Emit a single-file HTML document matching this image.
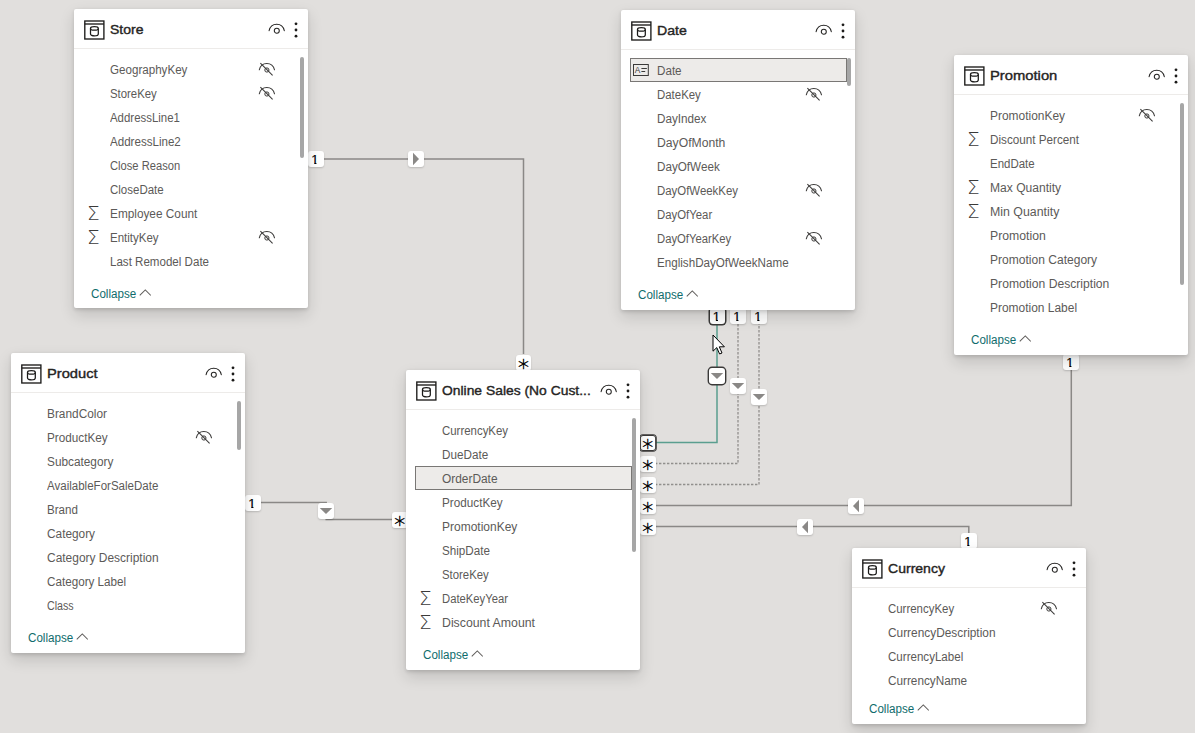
<!DOCTYPE html>
<html lang="en"><head><meta charset="utf-8"><title>Model view</title><style>
*{box-sizing:border-box}
html,body{margin:0;padding:0}
body{width:1195px;height:733px;overflow:hidden;background:#e1dfdd;font-family:"Liberation Sans",sans-serif;position:relative}
.card{position:absolute;width:234px;background:#fff;border-radius:2px;box-shadow:0 6.4px 14.4px rgba(0,0,0,.14),0 1.2px 3.6px rgba(0,0,0,.12)}
.hdr{position:absolute;left:0;top:0;width:100%;height:40px;border-bottom:1px solid #edebe9}
.ticon{position:absolute;left:10px;top:11px}
.title{position:absolute;left:36.1px;top:0;line-height:41px;font-size:13.7px;-webkit-text-stroke:.4px #252423;color:#252423;white-space:nowrap;transform-origin:0 50%}
.eye{position:absolute;left:193.5px;top:14.2px}
.dots{position:absolute;left:220.3px;top:13px}
.row{position:absolute;left:9px;width:217px;height:24px;border:1px solid transparent}
.row.sel{background:#edebe9;border:1px solid #797775}
.fn{position:absolute;left:25.7px;top:0;line-height:25px;font-size:12px;color:#5c5a58;white-space:nowrap;transform-origin:0 50%}
.sig{position:absolute;left:2.8px;top:0;line-height:22px;font-size:19px;font-weight:200;color:#3b3a39;font-family:"DejaVu Sans Light","DejaVu Sans",sans-serif;transform:scaleX(1.06);transform-origin:0 0}
.hid{position:absolute;left:174px;top:4px}
.fticon{position:absolute;left:2px;top:5px}
.sb{position:absolute;left:226px;width:4px;background:#a6a6a6;border-radius:2px}
.collapse{position:absolute;left:17.1px;height:20px;line-height:20px;font-size:12px;color:#0f6c6c;white-space:nowrap}
.ct{display:inline-block;transform-origin:0 50%}
.chev{position:absolute;left:47.8px;top:5.4px}
.mk{position:absolute;background:#fff;border-radius:3px;box-shadow:0 1px 2px rgba(0,0,0,.18);text-align:center;overflow:visible}
.mk.hot{box-shadow:0 0 0 1.5px #3b3a39}
.mk.hot.in{box-shadow:0 0 0 .8px #3b3a39,inset 0 0 0 .9px #3b3a39}
.one{position:absolute;left:-1px;right:1px;top:0;line-height:17.6px;font-size:13px;color:#000;-webkit-text-stroke:.2px #000;clip-path:polygon(0 0,100% 0,100% 11.9px,calc(50% + 1.6px) 11.9px,calc(50% + 1.6px) 100%,calc(50% - .5px) 100%,calc(50% - .5px) 11.9px,0 11.9px)}
.star{position:absolute;left:0;right:0;top:5px;line-height:16px;font-size:22px;font-weight:200;color:#000;-webkit-text-stroke:.42px #000;font-family:"DejaVu Sans Light","DejaVu Sans",sans-serif}
.ab{position:absolute;width:16px;height:16px;background:#fff;border-radius:3px;box-shadow:0 1px 2px rgba(0,0,0,.18)}
.ab.hot{box-shadow:0 0 0 1.4px #3b3a39}
.ab svg{position:absolute;left:0;top:0}
#wires{position:absolute;left:0;top:0}
#cursor{position:absolute;left:712.1px;top:334px}
</style></head><body>
<svg id="wires" width="1195" height="733" viewBox="0 0 1195 733" fill="none">
<g stroke="#8a8886" stroke-width="1.5">
<path d="M323 159 H523.5 V354"/>
<path d="M260 502.5 H326.2 V519.6 H392"/>
<path d="M655 505.5 H1071.3 V369"/>
<path d="M655 526.6 H968.8 V534"/>
</g>
<g stroke="#918f8d" stroke-width="1.3" stroke-dasharray="2.4 1.6">
<path d="M655 463.5 H738 V324"/>
<path d="M655 484.5 H759 V324"/>
</g>
<path d="M655 442.5 H717 V324" stroke="#5a9e8f" stroke-width="1.5"/>
</svg>
<div class="mk hot" style="left:709.6px;top:308px;width:15.6px;height:16px"><span class="one">1</span></div>
<div class="mk " style="left:730px;top:308px;width:15.6px;height:16px"><span class="one">1</span></div>
<div class="mk " style="left:751px;top:308px;width:15.6px;height:16px"><span class="one">1</span></div>
<div class="mk " style="left:308px;top:151px;width:15.6px;height:16px"><span class="one">1</span></div>
<div class="mk " style="left:245px;top:495px;width:15.6px;height:16px"><span class="one">1</span></div>
<div class="mk " style="left:1063px;top:354px;width:15.6px;height:16px"><span class="one">1</span></div>
<div class="mk " style="left:961px;top:533px;width:15.6px;height:16px"><span class="one">1</span></div>
<div class="mk " style="left:515.7px;top:354.6px;width:15.6px;height:16px"><span class="star">*</span></div>
<div class="mk " style="left:392px;top:512px;width:15.6px;height:16px"><span class="star">*</span></div>
<div class="mk hot in" style="left:640px;top:435px;width:15.6px;height:16px"><span class="star">*</span></div>
<div class="mk " style="left:640px;top:456px;width:15.6px;height:16px"><span class="star">*</span></div>
<div class="mk " style="left:640px;top:477px;width:15.6px;height:16px"><span class="star">*</span></div>
<div class="mk " style="left:640px;top:498px;width:15.6px;height:16px"><span class="star">*</span></div>
<div class="mk " style="left:640px;top:519px;width:15.6px;height:16px"><span class="star">*</span></div>
<div class="ab " style="left:408px;top:151px"><svg width="16" height="16" viewBox="0 0 16 16"><polygon points="5,1.8 11,8 5,14.2" fill="#8a8886"/></svg></div>
<div class="ab " style="left:318px;top:503px"><svg width="16" height="16" viewBox="0 0 16 16"><polygon points="1.8,5 14.2,5 8,11" fill="#8a8886"/></svg></div>
<div class="ab hot" style="left:709px;top:368px"><svg width="16" height="16" viewBox="0 0 16 16"><polygon points="1.8,5 14.2,5 8,11" fill="#8a8886"/></svg></div>
<div class="ab " style="left:730px;top:378px"><svg width="16" height="16" viewBox="0 0 16 16"><polygon points="1.8,5 14.2,5 8,11" fill="#8a8886"/></svg></div>
<div class="ab " style="left:751px;top:389px"><svg width="16" height="16" viewBox="0 0 16 16"><polygon points="1.8,5 14.2,5 8,11" fill="#8a8886"/></svg></div>
<div class="ab " style="left:848px;top:498px"><svg width="16" height="16" viewBox="0 0 16 16"><polygon points="11,1.8 5,8 11,14.2" fill="#8a8886"/></svg></div>
<div class="ab " style="left:797px;top:519px"><svg width="16" height="16" viewBox="0 0 16 16"><polygon points="11,1.8 5,8 11,14.2" fill="#8a8886"/></svg></div>
<div class="card" style="left:74px;top:9px;height:299px">
<div class="hdr"><svg class="ticon" width="22" height="21" viewBox="0 0 22 21"><rect x="0.8" y="1" width="19.1" height="18" fill="none" stroke="#1b1a19" stroke-width="1.35"/><line x1="0.8" y1="4" x2="19.9" y2="4" stroke="#1b1a19" stroke-width="1.35"/><ellipse cx="10.4" cy="8.4" rx="3.9" ry="1.8" fill="none" stroke="#1b1a19" stroke-width="1.25"/><path d="M6.5 8.4 V14 A3.9 1.9 0 0 0 14.3 14 V8.4" fill="none" stroke="#1b1a19" stroke-width="1.25"/></svg><span class="title" style="transform:scaleX(1.021)">Store</span><svg class="eye" width="18" height="13" viewBox="0 0 18 13"><path d="M1.1 7.7 C2.1 3.4 5.2 1.3 8.7 1.3 C12.2 1.3 15.3 3.4 16.3 7.7" fill="none" stroke="#252423" stroke-width="1.05" stroke-linecap="round"/><circle cx="8.8" cy="7.7" r="2.5" fill="none" stroke="#252423" stroke-width="1.05"/></svg><svg class="dots" width="4" height="16" viewBox="0 0 4 16"><circle cx="2" cy="1.8" r="1.4" fill="#1b1a19"/><circle cx="2" cy="8" r="1.4" fill="#1b1a19"/><circle cx="2" cy="14.2" r="1.4" fill="#1b1a19"/></svg></div>
<div class="list">
<div class="row" style="top:48px"><span class="fn" style="transform:scaleX(0.967)">GeographyKey</span><svg class="hid" width="18" height="14" viewBox="0 0 18 14"><path d="M1.3 7.8 C2.3 3.6 5.2 1.4 8.8 1.4 C12.4 1.4 15.5 3.6 16.5 7.8" fill="none" stroke="#3b3a39" stroke-width="1.05" stroke-linecap="round"/><circle cx="8.9" cy="8" r="2.1" fill="none" stroke="#3b3a39" stroke-width="1"/><line x1="2.4" y1="1.2" x2="14.6" y2="13.4" stroke="#3b3a39" stroke-width="1.05"/></svg></div>
<div class="row" style="top:72px"><span class="fn" style="transform:scaleX(0.948)">StoreKey</span><svg class="hid" width="18" height="14" viewBox="0 0 18 14"><path d="M1.3 7.8 C2.3 3.6 5.2 1.4 8.8 1.4 C12.4 1.4 15.5 3.6 16.5 7.8" fill="none" stroke="#3b3a39" stroke-width="1.05" stroke-linecap="round"/><circle cx="8.9" cy="8" r="2.1" fill="none" stroke="#3b3a39" stroke-width="1"/><line x1="2.4" y1="1.2" x2="14.6" y2="13.4" stroke="#3b3a39" stroke-width="1.05"/></svg></div>
<div class="row" style="top:96px"><span class="fn" style="transform:scaleX(0.952)">AddressLine1</span></div>
<div class="row" style="top:120px"><span class="fn" style="transform:scaleX(0.965)">AddressLine2</span></div>
<div class="row" style="top:144px"><span class="fn" style="transform:scaleX(0.931)">Close Reason</span></div>
<div class="row" style="top:168px"><span class="fn" style="transform:scaleX(0.958)">CloseDate</span></div>
<div class="row" style="top:192px"><span class="sig">Σ</span><span class="fn" style="transform:scaleX(0.984)">Employee Count</span></div>
<div class="row" style="top:216px"><span class="sig">Σ</span><span class="fn" style="transform:scaleX(0.959)">EntityKey</span><svg class="hid" width="18" height="14" viewBox="0 0 18 14"><path d="M1.3 7.8 C2.3 3.6 5.2 1.4 8.8 1.4 C12.4 1.4 15.5 3.6 16.5 7.8" fill="none" stroke="#3b3a39" stroke-width="1.05" stroke-linecap="round"/><circle cx="8.9" cy="8" r="2.1" fill="none" stroke="#3b3a39" stroke-width="1"/><line x1="2.4" y1="1.2" x2="14.6" y2="13.4" stroke="#3b3a39" stroke-width="1.05"/></svg></div>
<div class="row" style="top:240px"><span class="fn" style="transform:scaleX(0.964)">Last Remodel Date</span></div>
</div>
<div class="sb" style="top:48px;height:101px"></div>
<div class="collapse" style="top:274.5px"><span class="ct" style="transform:scaleX(0.968)">Collapse</span><svg class="chev" width="12.6" height="7.2" viewBox="0 0 12 7"><path d="M0.6 6.3 L6 0.9 L11.4 6.3" fill="none" stroke="#605e5c" stroke-width="1"/></svg></div>
</div>
<div class="card" style="left:621px;top:10px;height:300px">
<div class="hdr"><svg class="ticon" width="22" height="21" viewBox="0 0 22 21"><rect x="0.8" y="1" width="19.1" height="18" fill="none" stroke="#1b1a19" stroke-width="1.35"/><line x1="0.8" y1="4" x2="19.9" y2="4" stroke="#1b1a19" stroke-width="1.35"/><ellipse cx="10.4" cy="8.4" rx="3.9" ry="1.8" fill="none" stroke="#1b1a19" stroke-width="1.25"/><path d="M6.5 8.4 V14 A3.9 1.9 0 0 0 14.3 14 V8.4" fill="none" stroke="#1b1a19" stroke-width="1.25"/></svg><span class="title" style="transform:scaleX(1.030)">Date</span><svg class="eye" width="18" height="13" viewBox="0 0 18 13"><path d="M1.1 7.7 C2.1 3.4 5.2 1.3 8.7 1.3 C12.2 1.3 15.3 3.4 16.3 7.7" fill="none" stroke="#252423" stroke-width="1.05" stroke-linecap="round"/><circle cx="8.8" cy="7.7" r="2.5" fill="none" stroke="#252423" stroke-width="1.05"/></svg><svg class="dots" width="4" height="16" viewBox="0 0 4 16"><circle cx="2" cy="1.8" r="1.4" fill="#1b1a19"/><circle cx="2" cy="8" r="1.4" fill="#1b1a19"/><circle cx="2" cy="14.2" r="1.4" fill="#1b1a19"/></svg></div>
<div class="list">
<div class="row sel" style="top:48px"><svg class="fticon" width="16" height="12" viewBox="0 0 16 12"><rect x="0.5" y="0.5" width="14.8" height="11" fill="none" stroke="#3b3a39" stroke-width="1"/><text x="1.7" y="9.1" font-size="8.4" font-family="Liberation Sans, sans-serif" fill="#3b3a39">A</text><line x1="8.4" y1="4.5" x2="13.9" y2="4.5" stroke="#3b3a39" stroke-width="1"/><line x1="8.4" y1="7.5" x2="12.2" y2="7.5" stroke="#3b3a39" stroke-width="1"/></svg><span class="fn" style="transform:scaleX(0.970)">Date</span></div>
<div class="row" style="top:72px"><span class="fn" style="transform:scaleX(0.952)">DateKey</span><svg class="hid" width="18" height="14" viewBox="0 0 18 14"><path d="M1.3 7.8 C2.3 3.6 5.2 1.4 8.8 1.4 C12.4 1.4 15.5 3.6 16.5 7.8" fill="none" stroke="#3b3a39" stroke-width="1.05" stroke-linecap="round"/><circle cx="8.9" cy="8" r="2.1" fill="none" stroke="#3b3a39" stroke-width="1"/><line x1="2.4" y1="1.2" x2="14.6" y2="13.4" stroke="#3b3a39" stroke-width="1.05"/></svg></div>
<div class="row" style="top:96px"><span class="fn" style="transform:scaleX(0.976)">DayIndex</span></div>
<div class="row" style="top:120px"><span class="fn" style="transform:scaleX(1.015)">DayOfMonth</span></div>
<div class="row" style="top:144px"><span class="fn" style="transform:scaleX(0.973)">DayOfWeek</span></div>
<div class="row" style="top:168px"><span class="fn" style="transform:scaleX(0.951)">DayOfWeekKey</span><svg class="hid" width="18" height="14" viewBox="0 0 18 14"><path d="M1.3 7.8 C2.3 3.6 5.2 1.4 8.8 1.4 C12.4 1.4 15.5 3.6 16.5 7.8" fill="none" stroke="#3b3a39" stroke-width="1.05" stroke-linecap="round"/><circle cx="8.9" cy="8" r="2.1" fill="none" stroke="#3b3a39" stroke-width="1"/><line x1="2.4" y1="1.2" x2="14.6" y2="13.4" stroke="#3b3a39" stroke-width="1.05"/></svg></div>
<div class="row" style="top:192px"><span class="fn" style="transform:scaleX(0.947)">DayOfYear</span></div>
<div class="row" style="top:216px"><span class="fn" style="transform:scaleX(0.939)">DayOfYearKey</span><svg class="hid" width="18" height="14" viewBox="0 0 18 14"><path d="M1.3 7.8 C2.3 3.6 5.2 1.4 8.8 1.4 C12.4 1.4 15.5 3.6 16.5 7.8" fill="none" stroke="#3b3a39" stroke-width="1.05" stroke-linecap="round"/><circle cx="8.9" cy="8" r="2.1" fill="none" stroke="#3b3a39" stroke-width="1"/><line x1="2.4" y1="1.2" x2="14.6" y2="13.4" stroke="#3b3a39" stroke-width="1.05"/></svg></div>
<div class="row" style="top:240px"><span class="fn" style="transform:scaleX(0.969)">EnglishDayOfWeekName</span></div>
</div>
<div class="sb" style="top:48px;height:28px"></div>
<div class="collapse" style="top:274.5px"><span class="ct" style="transform:scaleX(0.968)">Collapse</span><svg class="chev" width="12.6" height="7.2" viewBox="0 0 12 7"><path d="M0.6 6.3 L6 0.9 L11.4 6.3" fill="none" stroke="#605e5c" stroke-width="1"/></svg></div>
</div>
<div class="card" style="left:954px;top:55px;height:300px">
<div class="hdr"><svg class="ticon" width="22" height="21" viewBox="0 0 22 21"><rect x="0.8" y="1" width="19.1" height="18" fill="none" stroke="#1b1a19" stroke-width="1.35"/><line x1="0.8" y1="4" x2="19.9" y2="4" stroke="#1b1a19" stroke-width="1.35"/><ellipse cx="10.4" cy="8.4" rx="3.9" ry="1.8" fill="none" stroke="#1b1a19" stroke-width="1.25"/><path d="M6.5 8.4 V14 A3.9 1.9 0 0 0 14.3 14 V8.4" fill="none" stroke="#1b1a19" stroke-width="1.25"/></svg><span class="title" style="transform:scaleX(1.079)">Promotion</span><svg class="eye" width="18" height="13" viewBox="0 0 18 13"><path d="M1.1 7.7 C2.1 3.4 5.2 1.3 8.7 1.3 C12.2 1.3 15.3 3.4 16.3 7.7" fill="none" stroke="#252423" stroke-width="1.05" stroke-linecap="round"/><circle cx="8.8" cy="7.7" r="2.5" fill="none" stroke="#252423" stroke-width="1.05"/></svg><svg class="dots" width="4" height="16" viewBox="0 0 4 16"><circle cx="2" cy="1.8" r="1.4" fill="#1b1a19"/><circle cx="2" cy="8" r="1.4" fill="#1b1a19"/><circle cx="2" cy="14.2" r="1.4" fill="#1b1a19"/></svg></div>
<div class="list">
<div class="row" style="top:48px"><span class="fn" style="transform:scaleX(0.995)">PromotionKey</span><svg class="hid" width="18" height="14" viewBox="0 0 18 14"><path d="M1.3 7.8 C2.3 3.6 5.2 1.4 8.8 1.4 C12.4 1.4 15.5 3.6 16.5 7.8" fill="none" stroke="#3b3a39" stroke-width="1.05" stroke-linecap="round"/><circle cx="8.9" cy="8" r="2.1" fill="none" stroke="#3b3a39" stroke-width="1"/><line x1="2.4" y1="1.2" x2="14.6" y2="13.4" stroke="#3b3a39" stroke-width="1.05"/></svg></div>
<div class="row" style="top:72px"><span class="sig">Σ</span><span class="fn" style="transform:scaleX(0.975)">Discount Percent</span></div>
<div class="row" style="top:96px"><span class="fn" style="transform:scaleX(0.957)">EndDate</span></div>
<div class="row" style="top:120px"><span class="sig">Σ</span><span class="fn" style="transform:scaleX(1.006)">Max Quantity</span></div>
<div class="row" style="top:144px"><span class="sig">Σ</span><span class="fn" style="transform:scaleX(1.029)">Min Quantity</span></div>
<div class="row" style="top:168px"><span class="fn" style="transform:scaleX(1.020)">Promotion</span></div>
<div class="row" style="top:192px"><span class="fn" style="transform:scaleX(1.004)">Promotion Category</span></div>
<div class="row" style="top:216px"><span class="fn" style="transform:scaleX(1.011)">Promotion Description</span></div>
<div class="row" style="top:240px"><span class="fn" style="transform:scaleX(0.996)">Promotion Label</span></div>
</div>
<div class="sb" style="top:48px;height:182px"></div>
<div class="collapse" style="top:274.5px"><span class="ct" style="transform:scaleX(0.968)">Collapse</span><svg class="chev" width="12.6" height="7.2" viewBox="0 0 12 7"><path d="M0.6 6.3 L6 0.9 L11.4 6.3" fill="none" stroke="#605e5c" stroke-width="1"/></svg></div>
</div>
<div class="card" style="left:11px;top:353px;height:300px">
<div class="hdr"><svg class="ticon" width="22" height="21" viewBox="0 0 22 21"><rect x="0.8" y="1" width="19.1" height="18" fill="none" stroke="#1b1a19" stroke-width="1.35"/><line x1="0.8" y1="4" x2="19.9" y2="4" stroke="#1b1a19" stroke-width="1.35"/><ellipse cx="10.4" cy="8.4" rx="3.9" ry="1.8" fill="none" stroke="#1b1a19" stroke-width="1.25"/><path d="M6.5 8.4 V14 A3.9 1.9 0 0 0 14.3 14 V8.4" fill="none" stroke="#1b1a19" stroke-width="1.25"/></svg><span class="title" style="transform:scaleX(1.073)">Product</span><svg class="eye" width="18" height="13" viewBox="0 0 18 13"><path d="M1.1 7.7 C2.1 3.4 5.2 1.3 8.7 1.3 C12.2 1.3 15.3 3.4 16.3 7.7" fill="none" stroke="#252423" stroke-width="1.05" stroke-linecap="round"/><circle cx="8.8" cy="7.7" r="2.5" fill="none" stroke="#252423" stroke-width="1.05"/></svg><svg class="dots" width="4" height="16" viewBox="0 0 4 16"><circle cx="2" cy="1.8" r="1.4" fill="#1b1a19"/><circle cx="2" cy="8" r="1.4" fill="#1b1a19"/><circle cx="2" cy="14.2" r="1.4" fill="#1b1a19"/></svg></div>
<div class="list">
<div class="row" style="top:48px"><span class="fn" style="transform:scaleX(0.988)">BrandColor</span></div>
<div class="row" style="top:72px"><span class="fn" style="transform:scaleX(0.977)">ProductKey</span><svg class="hid" width="18" height="14" viewBox="0 0 18 14"><path d="M1.3 7.8 C2.3 3.6 5.2 1.4 8.8 1.4 C12.4 1.4 15.5 3.6 16.5 7.8" fill="none" stroke="#3b3a39" stroke-width="1.05" stroke-linecap="round"/><circle cx="8.9" cy="8" r="2.1" fill="none" stroke="#3b3a39" stroke-width="1"/><line x1="2.4" y1="1.2" x2="14.6" y2="13.4" stroke="#3b3a39" stroke-width="1.05"/></svg></div>
<div class="row" style="top:96px"><span class="fn" style="transform:scaleX(0.984)">Subcategory</span></div>
<div class="row" style="top:120px"><span class="fn" style="transform:scaleX(0.961)">AvailableForSaleDate</span></div>
<div class="row" style="top:144px"><span class="fn" style="transform:scaleX(0.965)">Brand</span></div>
<div class="row" style="top:168px"><span class="fn" style="transform:scaleX(0.986)">Category</span></div>
<div class="row" style="top:192px"><span class="fn" style="transform:scaleX(0.996)">Category Description</span></div>
<div class="row" style="top:216px"><span class="fn" style="transform:scaleX(0.973)">Category Label</span></div>
<div class="row" style="top:240px"><span class="fn" style="transform:scaleX(0.890)">Class</span></div>
</div>
<div class="sb" style="top:48px;height:49px"></div>
<div class="collapse" style="top:274.5px"><span class="ct" style="transform:scaleX(0.968)">Collapse</span><svg class="chev" width="12.6" height="7.2" viewBox="0 0 12 7"><path d="M0.6 6.3 L6 0.9 L11.4 6.3" fill="none" stroke="#605e5c" stroke-width="1"/></svg></div>
</div>
<div class="card" style="left:406px;top:370px;height:300px">
<div class="hdr"><svg class="ticon" width="22" height="21" viewBox="0 0 22 21"><rect x="0.8" y="1" width="19.1" height="18" fill="none" stroke="#1b1a19" stroke-width="1.35"/><line x1="0.8" y1="4" x2="19.9" y2="4" stroke="#1b1a19" stroke-width="1.35"/><ellipse cx="10.4" cy="8.4" rx="3.9" ry="1.8" fill="none" stroke="#1b1a19" stroke-width="1.25"/><path d="M6.5 8.4 V14 A3.9 1.9 0 0 0 14.3 14 V8.4" fill="none" stroke="#1b1a19" stroke-width="1.25"/></svg><span class="title" style="transform:scaleX(1.013)">Online Sales (No Cust...</span><svg class="eye" width="18" height="13" viewBox="0 0 18 13"><path d="M1.1 7.7 C2.1 3.4 5.2 1.3 8.7 1.3 C12.2 1.3 15.3 3.4 16.3 7.7" fill="none" stroke="#252423" stroke-width="1.05" stroke-linecap="round"/><circle cx="8.8" cy="7.7" r="2.5" fill="none" stroke="#252423" stroke-width="1.05"/></svg><svg class="dots" width="4" height="16" viewBox="0 0 4 16"><circle cx="2" cy="1.8" r="1.4" fill="#1b1a19"/><circle cx="2" cy="8" r="1.4" fill="#1b1a19"/><circle cx="2" cy="14.2" r="1.4" fill="#1b1a19"/></svg></div>
<div class="list">
<div class="row" style="top:48px"><span class="fn" style="transform:scaleX(0.952)">CurrencyKey</span></div>
<div class="row" style="top:72px"><span class="fn" style="transform:scaleX(0.975)">DueDate</span></div>
<div class="row sel" style="top:96px"><span class="fn" style="transform:scaleX(0.991)">OrderDate</span></div>
<div class="row" style="top:120px"><span class="fn" style="transform:scaleX(0.977)">ProductKey</span></div>
<div class="row" style="top:144px"><span class="fn" style="transform:scaleX(0.999)">PromotionKey</span></div>
<div class="row" style="top:168px"><span class="fn" style="transform:scaleX(0.972)">ShipDate</span></div>
<div class="row" style="top:192px"><span class="fn" style="transform:scaleX(0.948)">StoreKey</span></div>
<div class="row" style="top:216px"><span class="sig">Σ</span><span class="fn" style="transform:scaleX(0.939)">DateKeyYear</span></div>
<div class="row" style="top:240px"><span class="sig">Σ</span><span class="fn" style="transform:scaleX(1.025)">Discount Amount</span></div>
</div>
<div class="sb" style="top:48px;height:134px"></div>
<div class="collapse" style="top:274.5px"><span class="ct" style="transform:scaleX(0.968)">Collapse</span><svg class="chev" width="12.6" height="7.2" viewBox="0 0 12 7"><path d="M0.6 6.3 L6 0.9 L11.4 6.3" fill="none" stroke="#605e5c" stroke-width="1"/></svg></div>
</div>
<div class="card" style="left:852px;top:548px;height:176px">
<div class="hdr"><svg class="ticon" width="22" height="21" viewBox="0 0 22 21"><rect x="0.8" y="1" width="19.1" height="18" fill="none" stroke="#1b1a19" stroke-width="1.35"/><line x1="0.8" y1="4" x2="19.9" y2="4" stroke="#1b1a19" stroke-width="1.35"/><ellipse cx="10.4" cy="8.4" rx="3.9" ry="1.8" fill="none" stroke="#1b1a19" stroke-width="1.25"/><path d="M6.5 8.4 V14 A3.9 1.9 0 0 0 14.3 14 V8.4" fill="none" stroke="#1b1a19" stroke-width="1.25"/></svg><span class="title" style="transform:scaleX(1.026)">Currency</span><svg class="eye" width="18" height="13" viewBox="0 0 18 13"><path d="M1.1 7.7 C2.1 3.4 5.2 1.3 8.7 1.3 C12.2 1.3 15.3 3.4 16.3 7.7" fill="none" stroke="#252423" stroke-width="1.05" stroke-linecap="round"/><circle cx="8.8" cy="7.7" r="2.5" fill="none" stroke="#252423" stroke-width="1.05"/></svg><svg class="dots" width="4" height="16" viewBox="0 0 4 16"><circle cx="2" cy="1.8" r="1.4" fill="#1b1a19"/><circle cx="2" cy="8" r="1.4" fill="#1b1a19"/><circle cx="2" cy="14.2" r="1.4" fill="#1b1a19"/></svg></div>
<div class="list">
<div class="row" style="top:48px"><span class="fn" style="transform:scaleX(0.953)">CurrencyKey</span><svg class="hid" style="left:177.8px" width="18" height="14" viewBox="0 0 18 14"><path d="M1.3 7.8 C2.3 3.6 5.2 1.4 8.8 1.4 C12.4 1.4 15.5 3.6 16.5 7.8" fill="none" stroke="#3b3a39" stroke-width="1.05" stroke-linecap="round"/><circle cx="8.9" cy="8" r="2.1" fill="none" stroke="#3b3a39" stroke-width="1"/><line x1="2.4" y1="1.2" x2="14.6" y2="13.4" stroke="#3b3a39" stroke-width="1.05"/></svg></div>
<div class="row" style="top:72px"><span class="fn" style="transform:scaleX(0.989)">CurrencyDescription</span></div>
<div class="row" style="top:96px"><span class="fn" style="transform:scaleX(0.964)">CurrencyLabel</span></div>
<div class="row" style="top:120px"><span class="fn" style="transform:scaleX(0.980)">CurrencyName</span></div>
</div>
<div class="collapse" style="top:150.5px"><span class="ct" style="transform:scaleX(0.968)">Collapse</span><svg class="chev" width="12.6" height="7.2" viewBox="0 0 12 7"><path d="M0.6 6.3 L6 0.9 L11.4 6.3" fill="none" stroke="#605e5c" stroke-width="1"/></svg></div>
</div>
<svg id="cursor" width="14" height="22" viewBox="0 0 14 22">
<path d="M1 1 L1 17.2 L4.8 13.6 L7.6 20 L10 19 L7.3 12.8 L12.4 12.8 Z" fill="#fff" stroke="#000" stroke-width="1" stroke-linejoin="miter"/>
</svg>
</body></html>
